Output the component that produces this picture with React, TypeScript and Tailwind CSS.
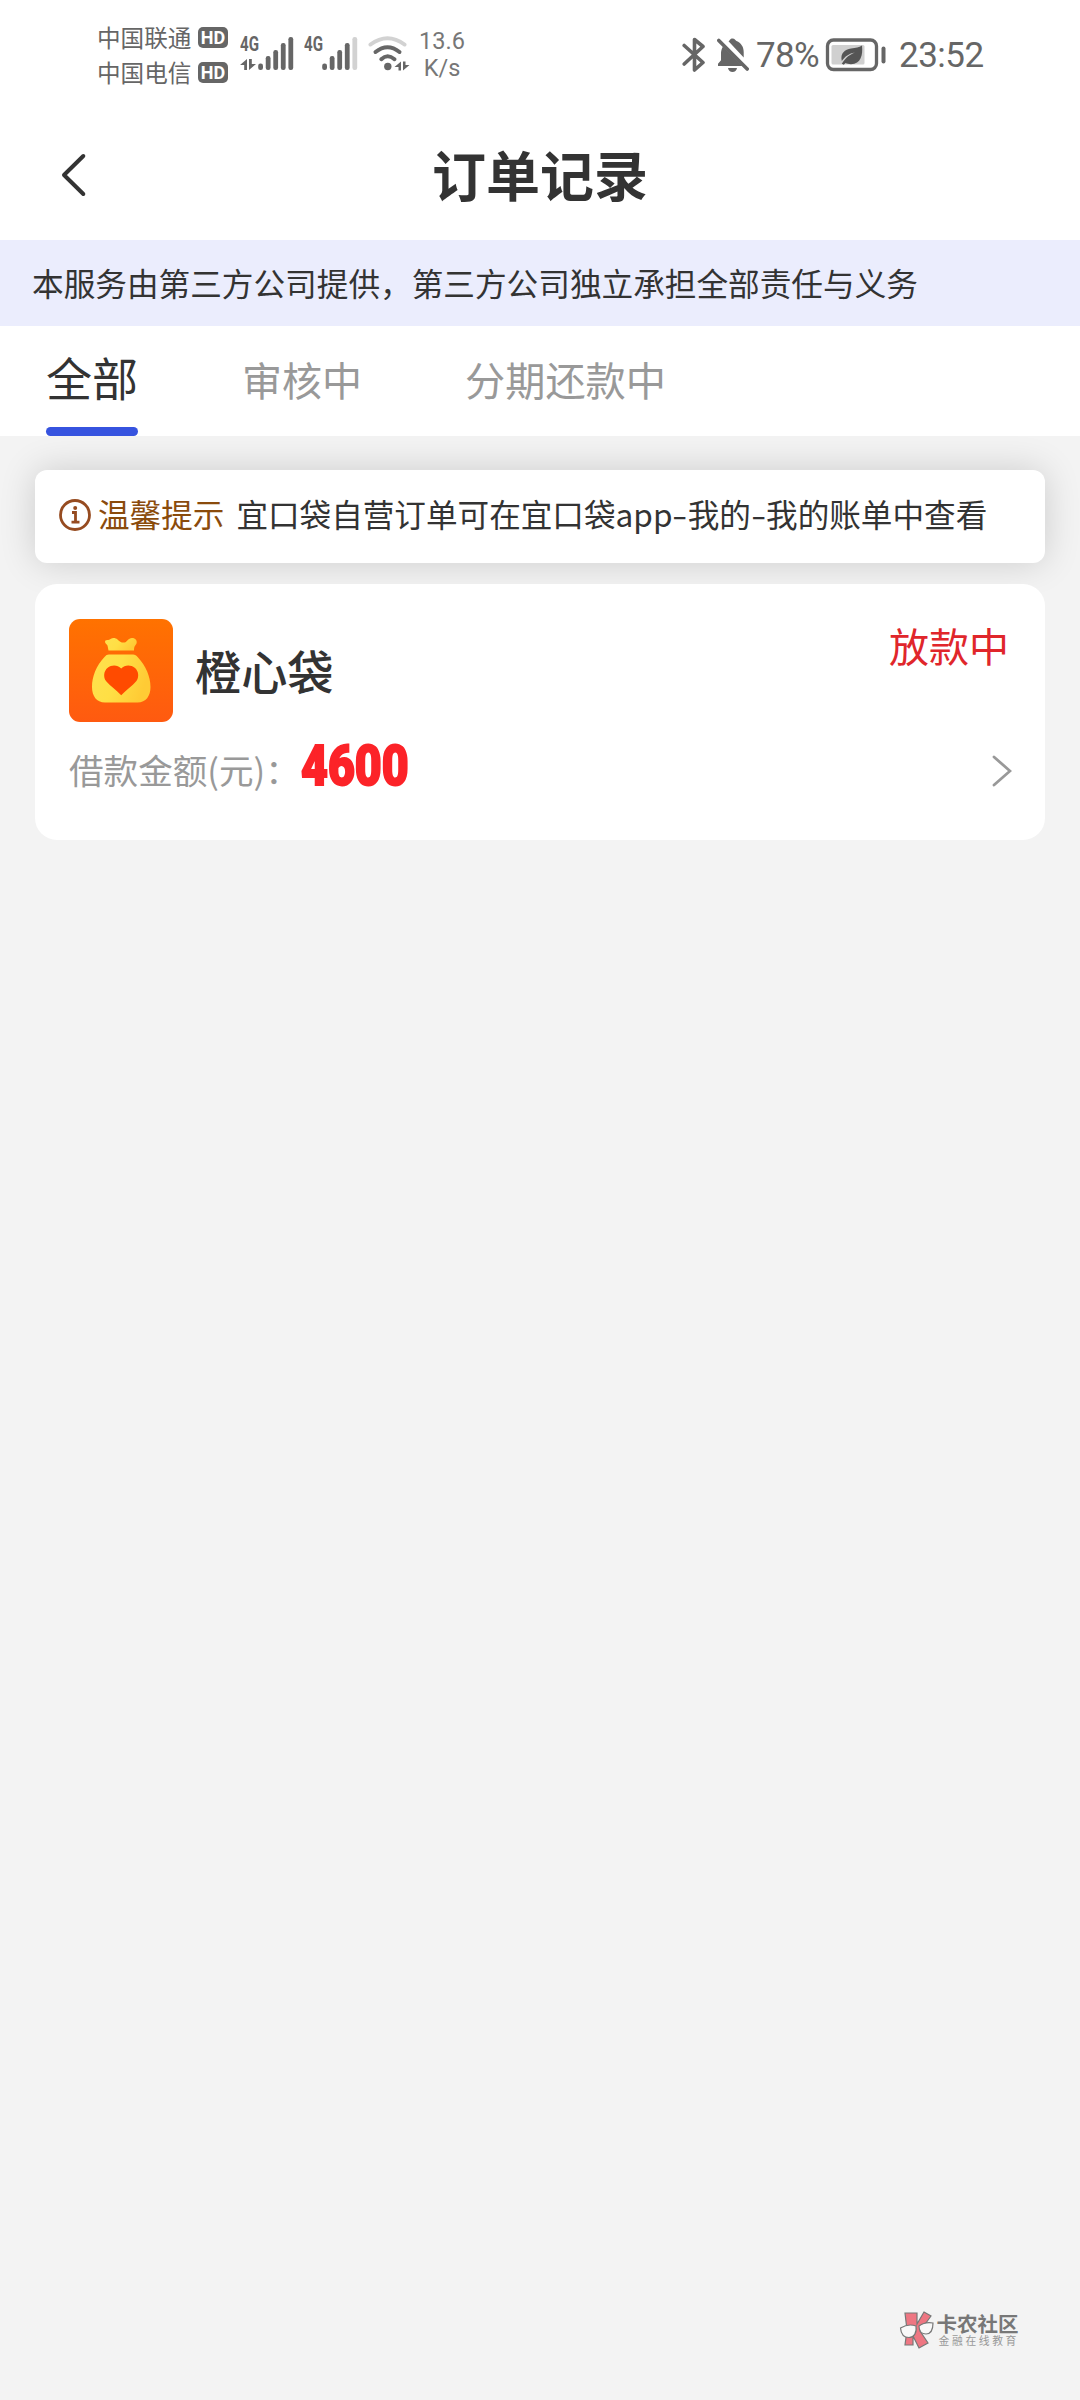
import React from 'react';

const dark = '#666666';

function Carrier({ name }: { name: string }) {
  return (
    <div className="flex h-[35px] items-center gap-1.5">
      <span className="w-[95px] whitespace-nowrap text-[23.6px] leading-9 text-[#666]">{name}</span>
      <span className="mt-[2px] flex h-[21px] w-[30px] items-center justify-center rounded-[5px] bg-[#666] font-['Roboto'] text-[18px] font-bold leading-none text-white">
        HD
      </span>
    </div>
  );
}

function Signal({ data, levels }: { data?: boolean; levels: number }) {
  const tops = [29, 21.5, 15.5, 8.5, 2.5];
  return (
    <div className="relative h-[38px] w-[56px]">
      <span className="absolute left-0 top-[2px] origin-left scale-x-[0.72] font-['Roboto'] text-[21px] font-bold leading-[15px] text-[#666]">
        4G
      </span>
      <svg className="h-[38px] w-[56px]" viewBox="0 0 56 38">
        {data && (
          <g fill={dark}>
            <path d="M7 24v11H4.200v-5H0z" />
            <path d="M9 24h2.800v5H16L9 35z" />
          </g>
        )}
        {tops.map((t, i) => (
          <rect key={i} x={18.2 + i * 7.55} y={t - 0.5} width="4.8" height={35.5 - t} rx="2.2" fill={i < levels ? dark : '#d2d2d2'} />
        ))}
      </svg>
    </div>
  );
}

function Wifi() {
  return (
    <svg className="h-[38px] w-[42px]" viewBox="0 0 42 38" fill="none" strokeLinecap="round" strokeWidth="4">
      <path d="M2.500 9.500Q19.500 -3 36.500 9.500" stroke="#d2d2d2" />
      <path d="M7.500 17Q19.500 7.500 31.500 17" stroke={dark} />
      <path d="M13.300 24.200Q19.500 18.300 26.500 24.200" stroke={dark} />
      <circle cx="19.800" cy="31.500" r="3.700" fill={dark} />
      <path d="M33 26.500v9h-2.500v-3.500h-4zM35 26.500h2.500V30h4L35 35.500z" fill={dark} />
    </svg>
  );
}

function StatusBar() {
  return (
    <div className="flex h-[110px] items-start justify-between pl-[97px] pr-[96px]">
      <div className="flex">
        <div className="flex flex-col pt-[19px]">
          <Carrier name="中国联通" />
          <Carrier name="中国电信" />
        </div>
        <div className="flex pl-[12px] pt-[35px]">
          <Signal data levels={5} />
          <div className="w-[8px]" />
          <Signal levels={4} />
          <div className="ml-[8px]">
            <Wifi />
          </div>
        </div>
        <div className="ml-[9px] mt-[28px] flex w-[46px] flex-col items-center font-['Roboto'] text-[23.5px] leading-[27px] text-[#777]">
          <span>13.6</span>
          <span>K/s</span>
        </div>
      </div>
      <div className="mt-[36px] flex h-[38px] items-center font-['Roboto'] text-[35px] leading-[38px] text-[#666]">
        <svg className="h-[38px] w-[24px]" viewBox="0 0 24 38" fill="none" stroke={dark} strokeWidth="3.6" strokeLinejoin="round" strokeLinecap="round">
          <path d="M2.2 9.500L21 26.500 12.500 34V3.500L21 10.500 2.200 28" />
        </svg>
        <svg className="ml-[11px] h-[38px] w-[32px]" viewBox="0 0 32 38" fill={dark}>
          <path d="M11.500 5.200C13 4.600 13 2.500 15.500 2.500s2.600 1.800 4 2.500c4.700 2 7.200 6 7.200 11v5.500z" />
          <path d="M6 10.500L25.500 30H1v-2.200l3-3.600V17c0-2 .8-4.500 2-6.500z" />
          <path d="M11 32h9c-.5 2.500-2.200 4-4.500 4S11.500 34.500 11 32z" />
          <path d="M1.800 4.500L30.200 33" stroke={dark} strokeWidth="3.600" strokeLinecap="round" />
        </svg>
        <span className="ml-[7px] mt-[2px] w-[63px] whitespace-nowrap tracking-[-0.700px]">78%</span>
        <svg className="ml-[6px] h-[38px] w-[62px]" viewBox="0 0 62 38">
          <rect x="2.500" y="4" width="49" height="29.500" rx="6" fill="none" stroke={dark} strokeWidth="3.300" />
          <rect x="6.500" y="9" width="33" height="19.500" rx="1.500" fill="#d0d0d0" />
          <path d="M37 9.500C38 19 36 28 26 28.200c-2.500 0-4-.6-5.500-1.200l-1.700 1.800-2-1C21 21 25 18.500 30 16.500c-6 1-10 4-13.200 8.500C15 17 20 13.500 26 12.500c5-.8 8-1 11-3z" fill="#555" />
          <rect x="56.500" y="10.500" width="4" height="17" rx="2" fill={dark} />
        </svg>
        <span className="ml-[12px] mt-[2px] w-[85px] whitespace-nowrap tracking-[-0.500px]">23:52</span>
      </div>
    </div>
  );
}

function Header() {
  return (
    <header className="grid h-[130px] grid-cols-[1fr_auto_1fr] items-center">
      <svg className="ml-[60px] h-[46px] w-[28px]" viewBox="0 0 28 46" fill="none" stroke="#333" strokeWidth="4" strokeLinecap="round" strokeLinejoin="round">
        <path d="M23.300 4L4 23l19.300 19" />
      </svg>
      <h1 className="pb-[3px] text-[54px] font-bold leading-[127px] text-[#333]">订单记录</h1>
      <span />
    </header>
  );
}

function Tabs() {
  return (
    <nav className="flex h-[110px] bg-white pl-[46px]">
      <div className="flex w-[92px] flex-col justify-between text-[46px] text-[#333]">
        <span className="whitespace-nowrap leading-[101px]">全部</span>
        <span className="h-[9px] rounded-full bg-[#3653df]" />
      </div>
      <span className="ml-[104px] text-[40px] leading-[106px] text-[#999]">审核中</span>
      <span className="ml-[103px] text-[40.200px] leading-[106px] text-[#999]">分期还款中</span>
    </nav>
  );
}

function Dash() {
  return <span className="inline-block w-[15.200px] origin-left scale-x-[1.400]">-</span>;
}

function Notice() {
  return (
    <div className="flex h-[93px] items-center rounded-[12px] bg-white pb-[7px] pl-[23px] text-[31.600px] leading-[80px] shadow-[0_0_36px_rgba(0,0,0,0.16)]">
      <svg className="mt-[4px] h-[34px] w-[34px]" viewBox="0 0 34 34" fill="none" stroke="#964b20">
        <circle cx="17" cy="17" r="14.500" strokeWidth="2.800" />
        <path d="M14 14.500h3.500v9.500M13.500 24.200h8" strokeWidth="2.800" />
        <circle cx="17.200" cy="10" r="2" fill="#964b20" stroke="none" />
      </svg>
      <span className="ml-[6px] text-[#8a4b0c]">温馨提示</span>
      <span className="ml-[12px] whitespace-nowrap text-[#333]">
        宜口袋自营订单可在宜口袋app
        <Dash />
        我的
        <Dash />
        我的账单中查看
      </span>
    </div>
  );
}

function BagLogo() {
  return (
    <svg className="h-[103px] w-[104px]" viewBox="0 0 104 103">
      <defs>
        <linearGradient id="tile" x1="0" y1="0" x2="0" y2="1">
          <stop offset="0" stopColor="#ff7200" />
          <stop offset="1" stopColor="#ff5a10" />
        </linearGradient>
        <linearGradient id="bag" x1="0" y1="0" x2="1" y2="0.300">
          <stop offset="0" stopColor="#ffe14e" />
          <stop offset="0.500" stopColor="#ffdf45" />
          <stop offset="1" stopColor="#ffcb35" />
        </linearGradient>
      </defs>
      <rect width="104" height="103" rx="11" fill="url(#tile)" />
      <path d="M39.500 31.500l-1-5c-1-1.500-3.500-3-2-5 1-.9 3 .3 5-1.500 2-1.500 5-1.500 7 .5 2 2.300 4.500 3.500 7 3 3-.5 3.500-4.500 7.500-4.500 3.500 0 5.500 2.500 4.500 5.500-1 2-2.500 2.500-2.500 7z" fill="url(#bag)" />
      <path d="M40 35.500h24c2 0 3.500 1 4.600 2.600C77 47 81.500 58 81.500 68c0 9-4.500 15.500-13 15.500H36c-8.500 0-13-6.500-13-15.500 0-10 4-21 12.500-29.900C37 36.300 38 35.500 40 35.500z" fill="url(#bag)" />
      <path d="M52.200 49.500c-3.500-3.800-9.500-4-13.500-.8s-4.700 9.500-1.500 13.500c4 5 10 8.500 15 14 5-5.500 11-9 15-14 3.200-4 2.500-10.300-1.500-13.500s-10-3-13.500.8z" fill="#ff4b00" />
    </svg>
  );
}

function OrderCard() {
  return (
    <div className="mt-[21px] flex h-[256px] flex-col rounded-[22px] bg-white pl-[34px] pr-[33px] pt-[35px]">
      <div className="flex h-[103px] items-start">
        <BagLogo />
        <span className="ml-[22px] text-[46.200px] font-medium leading-[101px] text-[#333]">橙心袋</span>
        <span className="ml-auto mr-[3px] text-[40px] leading-[53px] text-[#e0262b]">放款中</span>
      </div>
      <div className="flex h-[98px] items-center">
        <span className="w-[232px] whitespace-nowrap pb-[4px] text-[34.600px] leading-[94px] text-[#999]">借款金额(元)：</span>
        <span className="origin-left scale-x-[0.845] whitespace-nowrap pb-[10px] font-['Roboto'] text-[55px] font-black leading-[80px] text-[#fc2328] [-webkit-text-stroke:2px_#fc2328]">
          4600
        </span>
        <svg className="ml-auto h-[32px] w-[20px]" viewBox="0 0 20 32" fill="none" stroke="#999" strokeWidth="2.800" strokeLinecap="round">
          <path d="M2 2l16 14L2 30" />
        </svg>
      </div>
    </div>
  );
}

function Watermark() {
  return (
    <div className="mb-[51px] mr-[61px] mt-auto flex items-center gap-[2px] self-end">
      <svg className="h-[38px] w-[36px]" viewBox="0 0 36 38" stroke="#777" strokeWidth="1.200">
        <path d="M6 2h12v11l7-12 7 4-8 11-3 4 8 12-9 5-6-12v9H6l2-15z" fill="#ee7682" />
        <path d="M1.500 17c5-3 10-4 15.500-2 1 7-2 11.500-7 11.500S2 23 1.500 17zM20 15c4-3 9-4 14-3 0 6-2 11-7 11-4 0-7-3-7-8z" fill="#f8f8f8" />
      </svg>
      <div className="flex flex-col">
        <span className="whitespace-nowrap text-[20.500px] font-bold leading-[20px] text-[#777]">卡农社区</span>
        <span className="ml-[2px] whitespace-nowrap text-[10.800px] leading-[14px] tracking-[2.600px] text-[#999]">金融在线教育</span>
      </div>
    </div>
  );
}

export default function App() {
  return (
    <div className="flex h-[2400px] w-[1080px] flex-col overflow-hidden bg-white font-['Noto_Sans_CJK_SC',sans-serif]">
      <StatusBar />
      <Header />
      <div className="h-[86px] whitespace-nowrap bg-[#ebedfd] pl-[32px] text-[31.650px] leading-[84px] text-[#333]">
        本服务由第三方公司提供，第三方公司独立承担全部责任与义务
      </div>
      <Tabs />
      <main className="flex flex-1 flex-col overflow-hidden bg-[#f3f3f3]">
        <div className="px-[35px] pt-[34px]">
          <Notice />
          <OrderCard />
        </div>
        <Watermark />
      </main>
    </div>
  );
}
